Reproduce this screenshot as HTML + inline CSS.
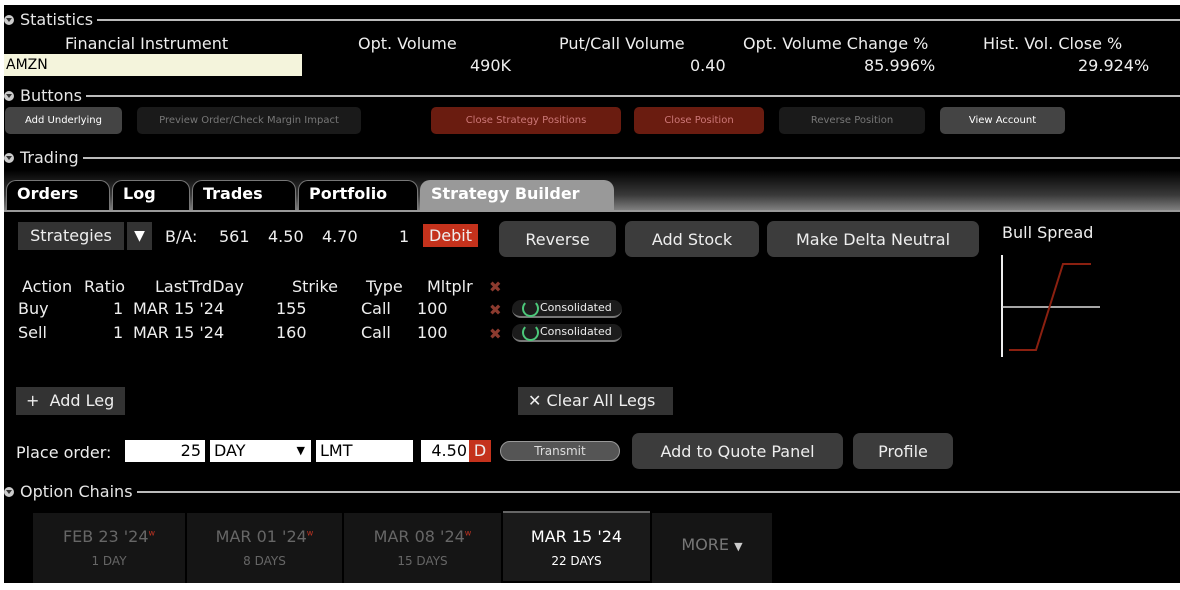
<!DOCTYPE html>
<html><head><style>
*{margin:0;padding:0;box-sizing:border-box}
body{width:1180px;height:590px;background:#fff;position:relative;overflow:hidden;font-family:"DejaVu Sans","Liberation Sans",sans-serif;color:#ddd}
#m{position:absolute;left:4px;top:5px;width:1176px;height:578px;background:#000}
.a{position:absolute;white-space:nowrap}
.sec{position:absolute;left:4px;right:0;font-size:16px;color:#e6e6e6;display:flex;align-items:center}
.sec:after{content:"";flex:1;height:2px;background:#bbb;margin-left:4px}
.sec i{display:inline-block;width:10px;height:10px;border-radius:50%;background:#ccc;margin-right:6px;position:relative}
.sec i:after{content:"";position:absolute;left:2px;top:3px;border-left:3px solid transparent;border-right:3px solid transparent;border-top:4px solid #333}
.b{position:absolute;height:27px;border-radius:5px;font-size:10px;display:flex;align-items:center;justify-content:center}
.g{position:absolute;height:36px;border-radius:7px;background:#3c3c3c;color:#eee;font-size:16px;display:flex;align-items:center;justify-content:center}
.tab{position:absolute;top:180px;height:30px;border:1px solid #777;border-bottom:none;border-radius:10px 10px 0 0;font-weight:bold;font-size:16px;color:#fff;padding:3px 10px}
.t{font-size:16px;color:#eee}
.in{position:absolute;background:#fff;color:#000;height:22px;font-size:16px;line-height:22px}
.x{color:#8b3a2e;font-weight:bold;font-size:15px}
.cons{position:absolute;left:512px;width:110px;height:18px;border-radius:9px;background:#1c1c1c;border-bottom:2px solid #777;font-size:11px;color:#eee;line-height:16px;padding-left:28px}
.cons:before{content:"";position:absolute;left:10px;top:0;width:13px;height:13px;border:2px solid #4cc87a;border-radius:50%;border-top-color:transparent}
.ex{position:absolute;top:513px;height:70px;background:#151515;text-align:center;color:#666}
.ex .d{font-size:16px;margin-top:14px}.ex .s{font-size:12px;margin-top:8px}
.ex sup{color:#b32;font-size:8px}
</style></head><body><div id="m"></div>
<div class="sec" style="top:10px"><i></i>Statistics</div>
<div class="a t" style="left:65px;top:34px">Financial Instrument</div>
<div class="a t" style="left:358px;top:34px">Opt. Volume</div>
<div class="a t" style="left:559px;top:34px">Put/Call Volume</div>
<div class="a t" style="left:743px;top:34px">Opt. Volume Change %</div>
<div class="a t" style="left:983px;top:34px">Hist. Vol. Close %</div>
<div class="a" style="left:4px;top:54px;width:298px;height:22px;background:#f4f4dc;color:#000;font-size:14px;line-height:22px;padding-left:2px">AMZN</div>
<div class="a t" style="left:470px;top:56px">490K</div>
<div class="a t" style="left:690px;top:56px">0.40</div>
<div class="a t" style="left:864px;top:56px">85.996%</div>
<div class="a t" style="left:1078px;top:56px">29.924%</div>
<div class="sec" style="top:86px"><i></i>Buttons</div>
<div class="b" style="left:5px;top:107px;width:117px;background:#444;color:#fff">Add Underlying</div>
<div class="b" style="left:137px;top:107px;width:224px;background:#1a1a1a;color:#777">Preview Order/Check Margin Impact</div>
<div class="b" style="left:431px;top:107px;width:190px;background:#6a1c10;color:#c77">Close Strategy Positions</div>
<div class="b" style="left:634px;top:107px;width:130px;background:#6a1c10;color:#c77">Close Position</div>
<div class="b" style="left:779px;top:107px;width:146px;background:#1a1a1a;color:#777">Reverse Position</div>
<div class="b" style="left:940px;top:107px;width:125px;background:#444;color:#fff">View Account</div>
<div class="sec" style="top:148px"><i></i>Trading</div>
<div class="a" style="left:4px;top:170px;width:1176px;height:42px;background:linear-gradient(#000,#3a3a3a 60%,#888)"></div>
<div class="a" style="left:4px;top:210px;width:1176px;height:2px;background:#999"></div>
<div class="tab" style="left:6px;width:104px;background:#000">Orders</div>
<div class="tab" style="left:112px;width:78px;background:#000">Log</div>
<div class="tab" style="left:192px;width:104px;background:#000">Trades</div>
<div class="tab" style="left:298px;width:120px;background:#000">Portfolio</div>
<div class="tab" style="left:420px;width:194px;background:#999;border-color:#999">Strategy Builder</div>
<div class="a" style="left:18px;top:222px;width:106px;height:28px;background:#333;font-size:16px;line-height:28px;text-align:center;color:#eee">Strategies</div>
<div class="a" style="left:127px;top:222px;width:25px;height:28px;background:#333;font-size:14px;line-height:28px;text-align:center;color:#fff">▼</div>
<div class="a t" style="left:165px;top:227px">B/A:</div>
<div class="a t" style="left:219px;top:227px">561</div>
<div class="a t" style="left:268px;top:227px">4.50</div>
<div class="a t" style="left:322px;top:227px">4.70</div>
<div class="a t" style="left:399px;top:227px">1</div>
<div class="a" style="left:423px;top:224px;width:55px;height:23px;background:#c4321c;color:#eee;font-size:16px;line-height:23px;text-align:center">Debit</div>
<div class="g" style="left:499px;top:221px;width:117px">Reverse</div>
<div class="g" style="left:625px;top:221px;width:134px">Add Stock</div>
<div class="g" style="left:767px;top:221px;width:212px">Make Delta Neutral</div>
<div class="a t" style="left:1002px;top:223px">Bull Spread</div>
<svg class="a" style="left:995px;top:250px" width="110" height="110"><line x1="7" y1="5" x2="7" y2="107" stroke="#eee" stroke-width="2"/><line x1="7" y1="57" x2="105" y2="57" stroke="#ddd" stroke-width="1.5"/><polyline points="14,100 41,100 68,14 96,14" fill="none" stroke="#8b2010" stroke-width="2"/></svg>
<div class="a t" style="left:22px;top:277px">Action</div>
<div class="a t" style="left:84px;top:277px">Ratio</div>
<div class="a t" style="left:155px;top:277px">LastTrdDay</div>
<div class="a t" style="left:292px;top:277px">Strike</div>
<div class="a t" style="left:366px;top:277px">Type</div>
<div class="a t" style="left:427px;top:277px">Mltplr</div>
<div class="a x" style="left:489px;top:278px">✖</div>
<div class="a t" style="left:18px;top:299px">Buy</div><div class="a t" style="left:113px;top:299px">1</div><div class="a t" style="left:133px;top:299px">MAR 15 '24</div><div class="a t" style="left:276px;top:299px">155</div><div class="a t" style="left:361px;top:299px">Call</div><div class="a t" style="left:417px;top:299px">100</div><div class="a x" style="left:489px;top:301px">✖</div><div class="cons" style="top:300px">Consolidated</div>
<div class="a t" style="left:18px;top:323px">Sell</div><div class="a t" style="left:113px;top:323px">1</div><div class="a t" style="left:133px;top:323px">MAR 15 '24</div><div class="a t" style="left:276px;top:323px">160</div><div class="a t" style="left:361px;top:323px">Call</div><div class="a t" style="left:417px;top:323px">100</div><div class="a x" style="left:489px;top:325px">✖</div><div class="cons" style="top:324px">Consolidated</div>
<div class="a" style="left:16px;top:387px;width:109px;height:28px;background:#333;font-size:16px;line-height:28px;padding-left:10px;color:#eee">+&nbsp; Add Leg</div>
<div class="a" style="left:518px;top:387px;width:155px;height:28px;background:#333;font-size:16px;line-height:28px;padding-left:10px;color:#eee">✕ Clear All Legs</div>
<div class="a t" style="left:16px;top:443px">Place order:</div>
<div class="in" style="left:125px;top:440px;width:80px;text-align:right;padding-right:4px">25</div>
<div class="in" style="left:210px;top:440px;width:101px;padding-left:4px">DAY<span style="position:absolute;right:6px;font-size:11px">▼</span></div>
<div class="in" style="left:316px;top:440px;width:97px;padding-left:4px">LMT</div>
<div class="in" style="left:421px;top:440px;width:48px;text-align:right;padding-right:2px">4.50</div>
<div class="in" style="left:469px;top:440px;width:22px;background:#c4321c;color:#eee;text-align:center">D</div>
<div class="a" style="left:500px;top:441px;width:120px;height:20px;border-radius:10px;background:#555;border:1px solid #999;color:#ddd;font-size:12px;line-height:18px;text-align:center">Transmit</div>
<div class="g" style="left:632px;top:433px;width:211px">Add to Quote Panel</div>
<div class="g" style="left:853px;top:433px;width:100px">Profile</div>
<div class="sec" style="top:482px"><i></i>Option Chains</div>
<div class="ex" style="left:33px;width:152px"><div class="d">FEB 23 '24<sup>w</sup></div><div class="s">1 DAY</div></div>
<div class="ex" style="left:187px;width:155px"><div class="d">MAR 01 '24<sup>w</sup></div><div class="s">8 DAYS</div></div>
<div class="ex" style="left:344px;width:157px"><div class="d">MAR 08 '24<sup>w</sup></div><div class="s">15 DAYS</div></div>
<div class="ex" style="left:503px;width:147px;background:#1a1a1a;border-top:2px solid #666;top:511px;color:#fff"><div class="d">MAR 15 '24</div><div class="s">22 DAYS</div></div>
<div class="ex" style="left:652px;width:120px;color:#777"><div class="d" style="margin-top:22px">MORE <span style="font-size:11px;color:#ccc">▼</span></div></div>
</body></html>
